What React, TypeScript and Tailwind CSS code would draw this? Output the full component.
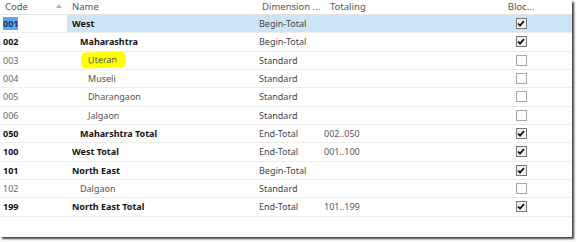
import React from "react";

type Row = {
  code: string;
  name: string;
  indent: number;
  bold: boolean;
  type: string;
  totaling: string;
  blocked: boolean;
  mark?: boolean;
};

const rows: Row[] = [
  { code: "001", name: "West", indent: 0, bold: true, type: "Begin-Total", totaling: "", blocked: true },
  { code: "002", name: "Maharashtra", indent: 1, bold: true, type: "Begin-Total", totaling: "", blocked: true },
  { code: "003", name: "Uteran", indent: 2, bold: false, type: "Standard", totaling: "", blocked: false, mark: true },
  { code: "004", name: "Museli", indent: 2, bold: false, type: "Standard", totaling: "", blocked: false },
  { code: "005", name: "Dharangaon", indent: 2, bold: false, type: "Standard", totaling: "", blocked: false },
  { code: "006", name: "Jalgaon", indent: 2, bold: false, type: "Standard", totaling: "", blocked: false },
  { code: "050", name: "Maharshtra Total", indent: 1, bold: true, type: "End-Total", totaling: "002..050", blocked: true },
  { code: "100", name: "West Total", indent: 0, bold: true, type: "End-Total", totaling: "001..100", blocked: true },
  { code: "101", name: "North East", indent: 0, bold: true, type: "Begin-Total", totaling: "", blocked: true },
  { code: "102", name: "Dalgaon", indent: 1, bold: false, type: "Standard", totaling: "", blocked: false },
  { code: "199", name: "North East Total", indent: 0, bold: true, type: "End-Total", totaling: "101..199", blocked: true },
];

const indents = ["pl-[5px]", "pl-[13px]", "pl-[21px]"];

const Check = ({ on }: { on: boolean }) => (
  <span
    className={`flex h-[11px] w-[11px] items-center justify-center border ${
      on ? "border-[#777] bg-[#f3f3f3]" : "border-[#a6a6a6] bg-white"
    }`}
  >
    {on && (
      <svg width="8" height="7" viewBox="0 0 8 7">
        <path d="M1 3.5 L3 5.6 L7 1" fill="none" stroke="#111" strokeWidth="1.8" />
      </svg>
    )}
  </span>
);

const App = () => {
  return (
    <div className="h-[242px] w-[577px] bg-white font-['Noto_Sans',sans-serif] text-[9px]">
      <div className="h-[237px] w-[572px] bg-white shadow-[2px_2px_2px_rgba(0,0,0,0.75)]">
        <div className="flex h-[15px] items-center border-b border-[#e3e3e3] text-[9.5px] text-[#555]">
          <div className="relative w-[67px] pl-[5px]">
            Code
            <svg className="absolute left-[56px] top-[4px]" width="6" height="4" viewBox="0 0 6 4">
              <path d="M0 4 L3 0 L6 4 Z" fill="#b5b5b5" />
            </svg>
          </div>
          <div className="w-[190px] pl-[5px]">Name</div>
          <div className="w-[65px] pl-[5px]">Dimension ...</div>
          <div className="w-[148px] pl-[8px]">Totaling</div>
          <div className="flex flex-1 justify-center">Bloc...</div>
        </div>
        {rows.map((r, i) => (
          <div key={r.code} className="flex h-[18.33px] items-center border-b border-[#ededed]">
            <div
              className={`w-[67px] pl-[3px] ${r.bold ? "font-bold text-[#111]" : "text-[#666]"}`}
            >
              {i === 0 ? (
                <span className="bg-[#5fa6e8] text-[#17356e]">{r.code}</span>
              ) : (
                r.code
              )}
            </div>
            <div className={`flex h-full flex-1 items-center ${i === 0 ? "bg-[#cde6f7]" : ""}`}>
              <div
                className={`w-[190px] ${indents[r.indent]} ${
                  r.bold ? "font-bold text-[#111]" : "text-[#555]"
                }`}
              >
                {r.mark ? (
                  <span className="-ml-[7px] inline-block -rotate-2 rounded-[5px] bg-[#ffff00] py-[3px] pl-[7px] pr-[9px] leading-[10px]">
                    {r.name}
                  </span>
                ) : (
                  r.name
                )}
              </div>
              <div className="w-[65px] pl-[2px] text-[#444]">{r.type}</div>
              <div className="w-[148px] pl-[2px] text-[#555]">{r.totaling}</div>
              <div className="flex flex-1 justify-center">
                <Check on={r.blocked} />
              </div>
            </div>
          </div>
        ))}
      </div>
    </div>
  );
};

export default App;
